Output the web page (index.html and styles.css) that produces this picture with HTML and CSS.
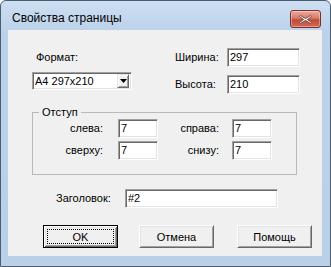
FILE: index.html
```html
<!DOCTYPE html>
<html lang="ru">
<head>
<meta charset="utf-8">
<title>Свойства страницы</title>
<link rel="stylesheet" href="styles.css">
</head>
<body>
<div class="window">
  <div class="titlebar">
    <span class="title">Свойства страницы</span>
    <div class="close">
      <svg width="15" height="11" viewBox="0 0 15 11">
        <path d="M2.5 1.5 L7.5 4.6 L12.5 1.5 L13.5 2.5 L9.5 5.5 L13.5 8.5 L12.5 9.5 L7.5 6.4 L2.5 9.5 L1.5 8.5 L5.5 5.5 L1.5 2.5 Z" fill="#fff" stroke="#6e3b34" stroke-width="0.9" stroke-linejoin="round"/>
      </svg>
    </div>
  </div>
  <div class="client">
    <div class="top">
      <div class="format">
        <label class="lbl">Формат:</label>
        <div class="select">
          <span class="select-text">A4 297x210</span>
          <span class="drop"><svg width="7" height="4" viewBox="0 0 7 4"><path d="M0 0 H7 L3.5 4 Z" fill="#000"/></svg></span>
        </div>
      </div>
      <div class="size">
        <label class="lbl">Ширина:</label><div class="field w73">297</div>
        <label class="lbl">Высота:</label><div class="field w73">210</div>
      </div>
    </div>
    <fieldset class="group">
      <legend class="legend">Отступ</legend>
      <div class="margins">
        <label class="lbl right">слева:</label><div class="field w40 end">7</div>
        <label class="lbl right">справа:</label><div class="field w40 end">7</div>
        <label class="lbl right">сверху:</label><div class="field w40 end">7</div>
        <label class="lbl right">снизу:</label><div class="field w40 end">7</div>
      </div>
    </fieldset>
    <div class="caption-row">
      <label class="lbl caption-lbl">Заголовок:</label>
      <div class="field w153">#2</div>
    </div>
    <div class="buttons">
      <div class="btn default b-ok"><span>OK</span></div>
      <div class="btn b-cancel"><span>Отмена</span></div>
      <div class="btn b-help"><span>Помощь</span></div>
    </div>
  </div>
</div>
</body>
</html>
```
FILE: styles.css
```css
* { box-sizing: border-box; }
html, body { margin: 0; padding: 0; background: #fff; }
body {
  font-family: "Liberation Sans", Arial, sans-serif;
  font-size: 11px;
  color: #000;
}
.window {
  width: 331px;
  height: 267px;
  border: 1px solid #4d5d70;
  border-radius: 6px 6px 0 0;
  background: linear-gradient(to bottom, #cddff2 0px, #bcd2ea 30px, #b9d0e9 100%);
  padding: 0 8px 10px 7px;
  display: flex;
  flex-direction: column;
}
.titlebar {
  height: 29px;
  display: flex;
  justify-content: space-between;
  align-items: flex-start;
}
.title {
  margin: 10px 0 0 4px;
  font-family: "Liberation Sans", Arial, sans-serif;
  font-size: 12px;
  line-height: 14px;
  color: #000;
}
.close {
  margin: 9px 1px 0 0;
  width: 31px;
  height: 18px;
  border: 1px solid #7e2e25;
  border-radius: 3px;
  background: linear-gradient(to bottom, #e9aa9e 0%, #d77a69 45%, #c14a3a 55%, #cf6a55 100%);
  display: flex;
  align-items: center;
  justify-content: center;
  box-shadow: inset 0 0 0 1px rgba(255,255,255,0.35);
}
.client {
  background: #f0f0f0;
  width: 314px;
  height: 226px;
  display: flex;
  flex-direction: column;
}
.lbl { line-height: 13px; white-space: nowrap; }
.right { text-align: right; }
.top { display: flex; height: 75px; }
.format {
  margin-left: 24px;
  width: 100px;
  padding-top: 21px;
  display: flex;
  flex-direction: column;
}
.format .lbl { margin-left: 4px; }
.select {
  margin-top: 8px;
  height: 18px;
  width: 100px;
  background: #fff;
  border: 1px solid;
  border-color: #a0a0a0 #fff #fff #a0a0a0;
  box-shadow: inset 1px 1px 0 #696969, inset -1px -1px 0 #e3e3e3;
  display: flex;
  align-items: center;
  padding: 0 2px 0 2px;
}
.select-text { flex: 1; line-height: 13px; font-size: 11px; }
.drop {
  width: 12px;
  height: 14px;
  background: #f0f0f0;
  border: 1px solid;
  border-color: #e3e3e3 #696969 #696969 #e3e3e3;
  box-shadow: inset 1px 1px 0 #fff, inset -1px -1px 0 #a0a0a0;
  display: flex;
  align-items: center;
  justify-content: center;
}
.size {
  margin-left: 43px;
  padding-top: 18px;
  display: grid;
  grid-template-columns: 52px 73px;
  grid-auto-rows: 19px;
  row-gap: 8px;
  align-items: center;
  align-content: start;
}
.field {
  height: 19px;
  background: #fff;
  border: 1px solid;
  border-color: #a0a0a0 #fff #fff #a0a0a0;
  box-shadow: inset 1px 1px 0 #696969, inset -1px -1px 0 #e3e3e3;
  padding: 0 2px;
  display: flex;
  align-items: center;
  line-height: 13px;
  font-size: 11px;
}
.w73 { width: 73px; }
.w40 { width: 40px; }
.w153 { width: 153px; }
.end { justify-self: end; }
.group {
  margin: 0 0 0 24px;
  width: 265px;
  padding: 0 6px 14px 6px;
  border: 1px solid #b9b9b9;
  min-inline-size: 0;
}
.legend {
  padding: 0 3px;
  line-height: 14px;
  font-size: 11px;
}
.margins {
  display: grid;
  grid-template-columns: 64px 55px 61px 53px;
  grid-auto-rows: 19px;
  row-gap: 3px;
  align-items: center;
}
.caption-row {
  margin-top: 14px;
  display: flex;
  align-items: center;
  height: 19px;
}
.caption-lbl { margin-left: 48px; width: 69px; }
.buttons {
  margin-top: 17px;
  display: flex;
}
.btn {
  position: relative;
  width: 75px;
  height: 23px;
  background: #f0f0f0;
  border: 1px solid;
  border-color: #fff #696969 #696969 #fff;
  box-shadow: inset 1px 1px 0 #e3e3e3, inset -1px -1px 0 #a0a0a0;
  display: flex;
  align-items: center;
  justify-content: center;
  font-size: 11px;
  line-height: 14px;
}
.btn.default {
  border: 1px solid #000;
  box-shadow: inset 1px 1px 0 #fff, inset -1px -1px 0 #696969, inset 2px 2px 0 #e3e3e3, inset -2px -2px 0 #a0a0a0;
}
.btn.default::after {
  content: "";
  position: absolute;
  left: 3px; top: 3px; right: 3px; bottom: 3px;
  border: 1px dotted #000;
}
.b-ok { margin-left: 35px; }
.b-cancel { margin-left: 21px; }
.b-help { margin-left: 23px; }
```
